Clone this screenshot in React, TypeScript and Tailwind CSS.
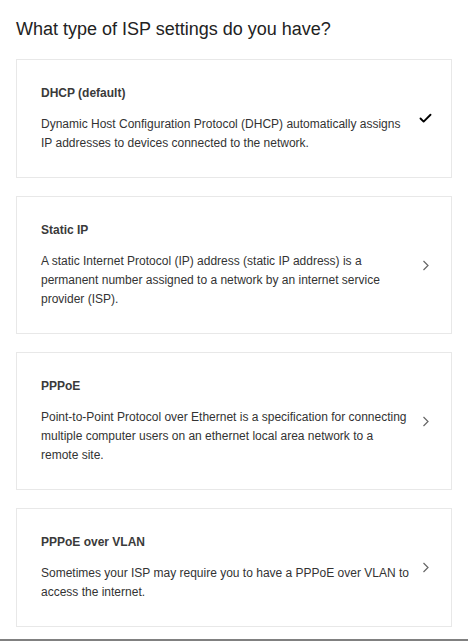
import { Check } from "lucide-react";

const options = [
  {
    id: "dhcp",
    name: "DHCP (default)",
    description:
      "Dynamic Host Configuration Protocol (DHCP) automatically assigns IP addresses to devices connected to the network.",
    selected: true,
  },
  {
    id: "static",
    name: "Static IP",
    description:
      "A static Internet Protocol (IP) address (static IP address) is a permanent number assigned to a network by an internet service provider (ISP).",
    selected: false,
  },
  {
    id: "pppoe",
    name: "PPPoE",
    description:
      "Point-to-Point Protocol over Ethernet is a specification for connecting multiple computer users on an ethernet local area network to a remote site.",
    selected: false,
  },
  {
    id: "pppoe-vlan",
    name: "PPPoE over VLAN",
    description:
      "Sometimes your ISP may require you to have a PPPoE over VLAN to access the internet.",
    selected: false,
  },
];

export default function App() {
  return (
    <div className="min-h-screen bg-white font-['Liberation_Sans',Arial,sans-serif] text-[#333]">
      <div className="px-4 pt-[17px]">
        <h1 className="text-[18px] leading-[24px] font-normal text-[#222]">
          What type of ISP settings do you have?
        </h1>

        {/* option cards */}
        <div className="mt-[18px] flex flex-col gap-[18px]">
          {options.map((opt) => (
            <button
              key={opt.id}
              className="flex items-center border border-[#e8e8e8] bg-white pl-6 pr-[18px] py-6 text-left"
            >
              <div className="w-[371px]">
                <div className="text-[12px] leading-[19px] font-bold text-[#3a3a3a]">{opt.name}</div>
                <p className="mt-3 text-[12px] leading-[19px] text-[#333]">{opt.description}</p>
              </div>
              <div className="ml-[5px] w-4 h-4 flex items-center justify-center">
                {opt.selected ? (
                  <Check className="w-[15px] h-[15px] text-black" strokeWidth={3} />
                ) : (
                  <svg width="8" height="11" viewBox="0 0 8 11" fill="none" className="ml-[1px]">
                    <polyline points="1.5,1 6,5.5 1.5,10" stroke="#666" strokeWidth="1.2" />
                  </svg>
                )}
              </div>
            </button>
          ))}
        </div>
      </div>
      <div className="mt-3 h-[2px] bg-[#808080]" />
    </div>
  );
}
